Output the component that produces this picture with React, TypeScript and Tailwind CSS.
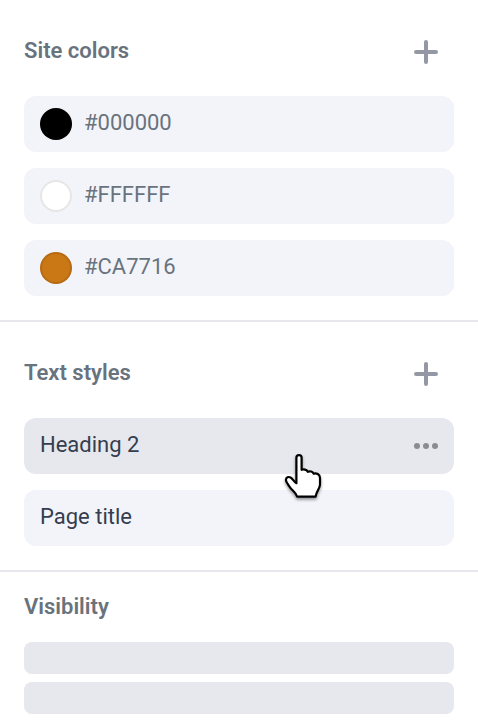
import React from "react";

const siteColors = ["#000000", "#FFFFFF", "#CA7716"];

function PlusIcon() {
  return (
    <svg width="24" height="24" viewBox="0 0 24 24" fill="none" stroke="#9498a4" strokeWidth="4" strokeLinecap="round" aria-hidden="true">
      <path d="M12 2v20M2 12h20" />
    </svg>
  );
}

function SectionHeader({ title }: { title: string }) {
  return (
    <header className="flex h-24 items-center justify-between pr-4">
      <h2 className="mt-[5px] text-[22px] leading-7 font-semibold">{title}</h2>
      <button type="button" aria-label={`Add ${title}`} className="mt-2">
        <PlusIcon />
      </button>
    </header>
  );
}

function Swatch({ color }: { color: string }) {
  return (
    <span className="relative size-8 shrink-0 rounded-full" style={{ backgroundColor: color }}>
      <span className="absolute inset-0 rounded-full border-2 border-black/10" />
    </span>
  );
}

function HandCursor() {
  return (
    <svg className="pointer-events-none absolute top-[22px] left-[246px] overflow-visible drop-shadow-[0_2px_1.5px_rgba(0,0,0,0.4)]" width="70" height="70" viewBox="0 0 70 70" aria-hidden="true">
      <path
        d="M26.4 17.6C26.4 14.4 31.6 14.4 31.6 17.6V29.8C33.5 28.9 36.8 29.5 37.8 31.8C39.8 30.8 42.7 31.4 43.7 33.7C46.3 32.5 50 34.3 50 38V44.5C50 48.3 46.2 51.6 45.6 56.7H27.2C26 52.4 21.9 50.6 19.6 46.7C18.5 44.9 15.9 42.1 15.9 40C15.9 37.2 18.5 36.4 20.6 37.5C23 38.8 24.1 42.2 26.4 43.2Z"
        fill="#fff"
        stroke="#000"
        strokeWidth="2.2"
        strokeLinejoin="round"
      />
    </svg>
  );
}

export default function App() {
  return (
    <main className="h-[720px] w-[478px] overflow-hidden bg-white font-[Roboto,sans-serif] text-[22px] leading-7 text-[#69737d]">
      <section className="border-b-2 border-[#e7e8ed] px-6 pb-6">
        <SectionHeader title="Site colors" />
        <ul className="flex flex-col gap-4">
          {siteColors.map((color) => (
            <li key={color} className="flex h-14 items-center gap-3 rounded-xl bg-[#f3f4fa] px-4">
              <Swatch color={color} />
              <span className="pb-0.5">{color}</span>
            </li>
          ))}
        </ul>
      </section>
      <section className="border-b-2 border-[#e7e8ed] px-6 pb-6">
        <SectionHeader title="Text styles" />
        <div className="flex flex-col gap-4 text-[#353d4e]">
          <div className="relative z-10 flex h-14 items-center justify-between rounded-xl bg-[#e7e8ee] px-4">
            <span className="pb-0.5">Heading 2</span>
            <svg width="24" height="6" viewBox="0 0 24 6" fill="#8b8c92" aria-hidden="true">
              <circle cx="3" cy="3" r="3" />
              <circle cx="12" cy="3" r="3" />
              <circle cx="21" cy="3" r="3" />
            </svg>
            <HandCursor />
          </div>
          <div className="flex h-14 items-center rounded-xl bg-[#f3f4fa] px-4">
            <span className="pb-0.5">Page title</span>
          </div>
        </div>
      </section>
      <section className="px-6 pt-[21px]">
        <h2 className="font-semibold">Visibility</h2>
        <div className="mt-[21px] flex flex-col gap-2">
          <div className="h-8 rounded-lg bg-[#e7e8ed]" />
          <div className="h-8 rounded-lg bg-[#e7e8ed]" />
        </div>
      </section>
    </main>
  );
}
